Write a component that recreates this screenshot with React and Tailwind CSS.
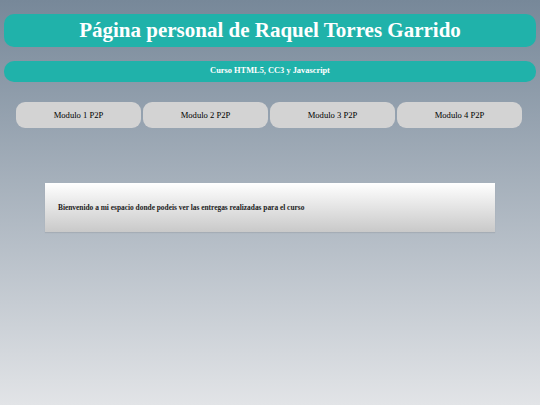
const modules = ["Modulo 1 P2P", "Modulo 2 P2P", "Modulo 3 P2P", "Modulo 4 P2P"];

export default function App() {
  return (
    <div
      className="min-h-[405px] w-[540px] bg-gradient-to-b from-[#778899] to-[#e2e4e7] pt-[14px]"
      style={{ fontFamily: '"Liberation Serif", "Times New Roman", serif' }}
    >
      <header className="mx-[4px] flex h-[33px] items-center justify-center rounded-[10px] bg-[#20b2aa]">
        <h1 className="text-[21px] font-bold leading-none text-white">
          Página personal de Raquel Torres Garrido
        </h1>
      </header>

      <div className="mx-[4px] mt-[14px] flex h-[21px] items-center justify-center rounded-[10px] bg-[#20b2aa]">
        <h2 className="text-[8.4px] font-bold leading-none text-white">
          Curso HTML5, CC3 y Javascript
        </h2>
      </div>

      <nav className="mt-[20px] flex gap-[2px] px-[16px]">
        {modules.map((m) => (
          <button
            key={m}
            className="flex h-[26px] w-[125px] items-center justify-center rounded-[9px] bg-[#d3d3d3] text-[8.6px] text-black"
          >
            {m}
          </button>
        ))}
      </nav>

      <section className="mx-[45px] mt-[55px] flex h-[49px] items-center bg-gradient-to-b from-[#ffffff] to-[#c9c9c9] px-[13px] shadow-[0_1px_1px_rgba(0,0,0,0.08)]">
        <p className="text-[7.4px] font-bold leading-none text-[#222]">
          Bienvenido a mi espacio donde podeis ver las entregas realizadas para el curso
        </p>
      </section>
    </div>
  );
}
